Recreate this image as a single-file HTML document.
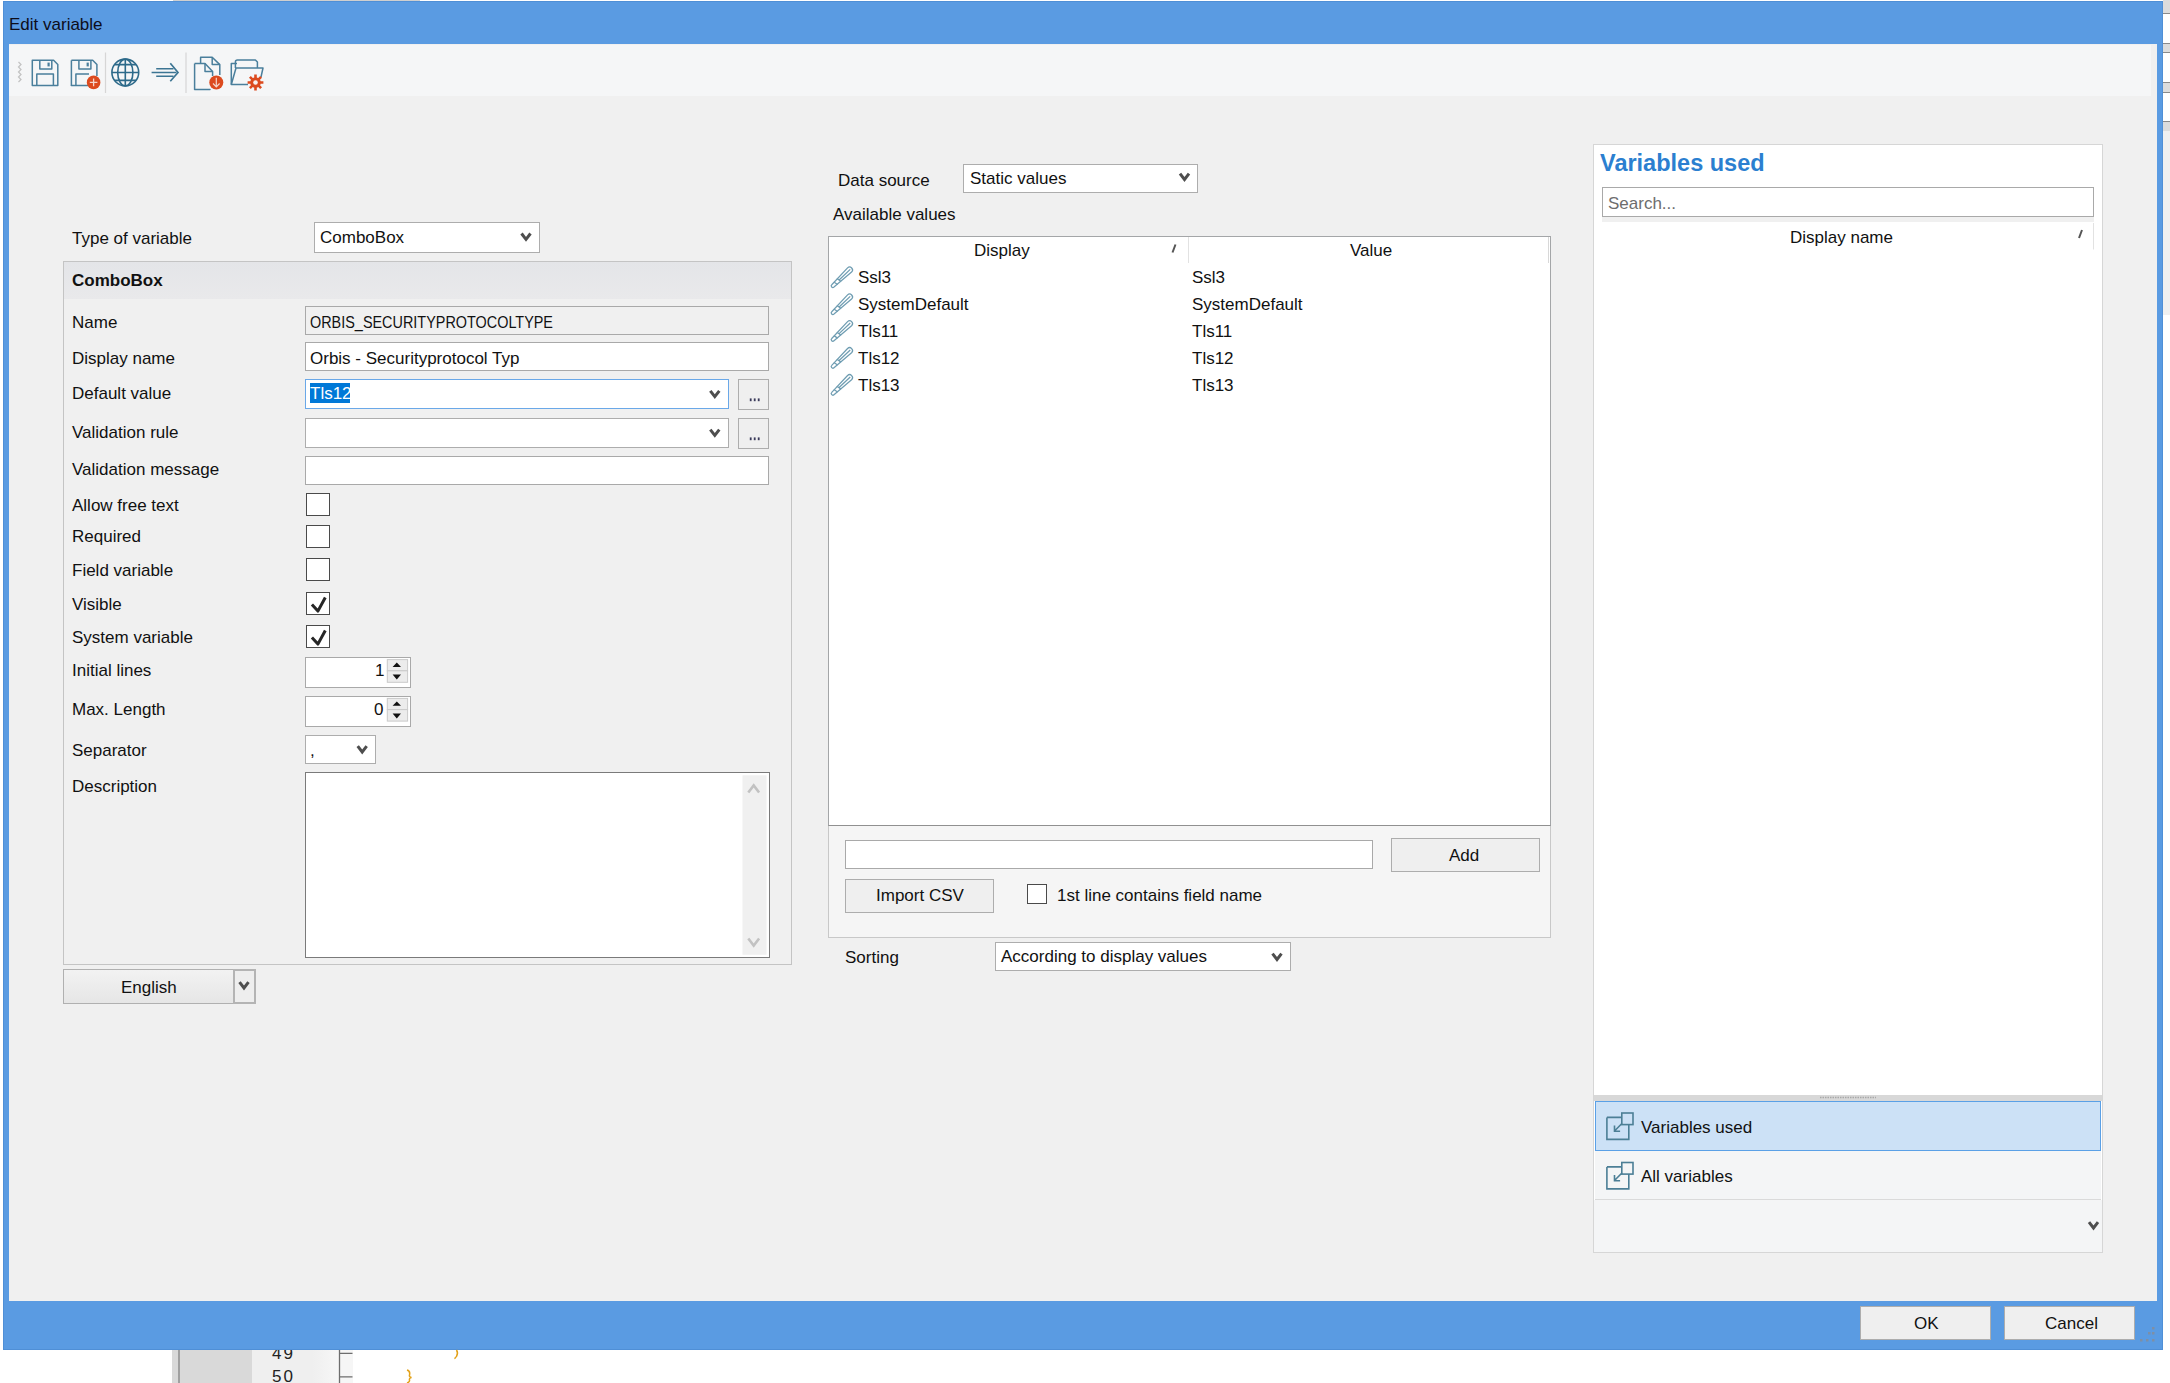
<!DOCTYPE html>
<html><head><meta charset="utf-8">
<style>
html,body{margin:0;padding:0}
body{width:2170px;height:1383px;overflow:hidden;background:#fff;position:relative;font-family:"Liberation Sans",sans-serif;font-size:17px;color:#111}
.a{position:absolute;box-sizing:border-box}
.t{position:absolute;white-space:pre;font-size:17px;line-height:normal}
.tb{border:1px solid #a9a9a9;background:#fff}
.cb{border:1px solid #adadad;background:#fff}
.btn{border:1px solid #adadad;background:#efefef}
.chk{border:1px solid #4a4a4a;background:#fff;width:24px;height:23px}
</style></head><body>

<!-- background remnants -->
<div class="a" style="left:173px;top:0;width:247px;height:2px;background:#cfcfcf"></div>
<div class="a" style="left:2163px;top:0;width:7px;height:14px;background:#dcdcdc;border-bottom:1px solid #8a8a8a"></div>
<div class="a" style="left:2163px;top:43px;width:7px;height:10px;background:#dcdcdc;border-top:1px solid #8a8a8a;border-bottom:1px solid #8a8a8a"></div>
<div class="a" style="left:2163px;top:82px;width:7px;height:11px;background:#dcdcdc;border-top:1px solid #8a8a8a;border-bottom:1px solid #8a8a8a"></div>
<div class="a" style="left:2163px;top:121px;width:7px;height:10px;background:#dcdcdc;border-top:1px solid #8a8a8a"></div>
<div class="a" style="left:2163px;top:131px;width:7px;height:184px;background:#f0f0f0"></div>

<!-- code editor remnant -->
<div class="a" style="left:172px;top:1340px;width:80px;height:43px;background:#d9d9d9"></div>
<div class="a" style="left:178px;top:1340px;width:1.5px;height:43px;background:#a0a0a0"></div>
<div class="a" style="left:252px;top:1340px;width:87px;height:43px;background:linear-gradient(90deg,#efefef 70%,#f7f7f7)"></div>
<div class="a" style="left:340px;top:1340px;width:13px;height:43px;background:#f6f6f6"></div>
<div class="t" style="left:272px;top:1344px;color:#222;letter-spacing:2px">49</div>
<div class="t" style="left:272px;top:1367px;color:#222;letter-spacing:2px">50</div>

<!-- dialog frame -->
<div class="a" style="left:3px;top:1px;width:2160px;height:1349px;background:#5a9be2;border:1px solid #4f8fd6"></div>
<div class="t" style="left:9px;top:15px;color:#0d0d1a">Edit variable</div>

<!-- content -->
<div class="a" style="left:9px;top:44px;width:2148px;height:1257px;background:#f0f0f0"></div>

<!-- toolbar -->
<div class="a" style="left:9px;top:45px;width:2142px;height:51px;background:#f5f6f7"></div>

<!-- LEFT PANEL -->
<div class="t" style="left:72px;top:229px">Type of variable</div>
<div class="a cb" style="left:314px;top:222px;width:226px;height:31px"></div>
<div class="t" style="left:320px;top:228px">ComboBox</div>

<!-- group box -->
<div class="a" style="left:63px;top:261px;width:729px;height:704px;border:1px solid #c4c4c4;background:#f0f0f0"></div>
<div class="a" style="left:64px;top:262px;width:727px;height:37px;background:linear-gradient(#e4e5e8,#e9e9eb)"></div>
<div class="t" style="left:72px;top:271px;font-weight:bold">ComboBox</div>

<div class="t" style="left:72px;top:313px">Name</div>
<div class="t" style="left:72px;top:349px">Display name</div>
<div class="t" style="left:72px;top:384px">Default value</div>
<div class="t" style="left:72px;top:423px">Validation rule</div>
<div class="t" style="left:72px;top:460px">Validation message</div>
<div class="t" style="left:72px;top:496px">Allow free text</div>
<div class="t" style="left:72px;top:527px">Required</div>
<div class="t" style="left:72px;top:561px">Field variable</div>
<div class="t" style="left:72px;top:595px">Visible</div>
<div class="t" style="left:72px;top:628px">System variable</div>
<div class="t" style="left:72px;top:661px">Initial lines</div>
<div class="t" style="left:72px;top:700px">Max. Length</div>
<div class="t" style="left:72px;top:741px">Separator</div>
<div class="t" style="left:72px;top:777px">Description</div>

<!-- name -->
<div class="a tb" style="left:305px;top:306px;width:464px;height:29px;background:#f0f0f0"></div>
<div class="t" style="left:310px;top:313px;transform:scaleX(0.848);transform-origin:0 0">ORBIS_SECURITYPROTOCOLTYPE</div>
<div class="a tb" style="left:305px;top:342px;width:464px;height:29px"></div>
<div class="t" style="left:310px;top:349px">Orbis - Securityprotocol Typ</div>
<!-- default value -->
<div class="a" style="left:305px;top:379px;width:424px;height:30px;border:1px solid #6aa8e8;background:#fff"></div>
<div class="a" style="left:310px;top:383px;width:40px;height:20px;background:#0078d7"></div>
<div class="t" style="left:310px;top:384px;color:#fff">Tls12</div>
<div class="a btn" style="left:738px;top:379px;width:31px;height:31px"></div>
<!-- validation rule -->
<div class="a cb" style="left:305px;top:418px;width:424px;height:30px"></div>
<div class="a btn" style="left:738px;top:418px;width:31px;height:31px"></div>
<!-- validation message -->
<div class="a tb" style="left:305px;top:456px;width:464px;height:29px"></div>
<!-- checkboxes -->
<div class="a chk" style="left:306px;top:493px"></div>
<div class="a chk" style="left:306px;top:525px"></div>
<div class="a chk" style="left:306px;top:558px"></div>
<div class="a chk" style="left:306px;top:592px"></div>
<div class="a chk" style="left:306px;top:625px"></div>
<!-- spinners -->
<div class="a tb" style="left:305px;top:657px;width:106px;height:31px"></div>
<div class="t" style="left:375px;top:661px">1</div>
<div class="a tb" style="left:305px;top:696px;width:106px;height:31px"></div>
<div class="t" style="left:374px;top:700px">0</div>
<!-- separator -->
<div class="a cb" style="left:305px;top:735px;width:71px;height:29px"></div>
<div class="t" style="left:310px;top:741px">,</div>
<!-- description -->
<div class="a" style="left:305px;top:772px;width:465px;height:186px;border:1px solid #7a7a7a;background:#fff"></div>
<!-- english -->
<div class="a" style="left:63px;top:969px;width:193px;height:35px;border:1px solid #b0b0b0;background:linear-gradient(#f2f2f2,#e6e6e6)"></div>
<div class="a" style="left:233px;top:969px;width:23px;height:35px;border:2px solid #b4b4b4;background:#eeeeee"></div>
<div class="t" style="left:121px;top:978px">English</div>

<!-- MIDDLE PANEL -->
<div class="t" style="left:838px;top:171px">Data source</div>
<div class="a cb" style="left:963px;top:164px;width:235px;height:29px"></div>
<div class="t" style="left:970px;top:169px">Static values</div>
<div class="t" style="left:833px;top:205px">Available values</div>

<div class="a" style="left:828px;top:236px;width:723px;height:590px;border:1px solid #a4a6a8;border-bottom:1px solid #909090;background:#fff"></div>
<div class="t" style="left:974px;top:241px">Display</div>
<div class="t" style="left:1350px;top:241px">Value</div>
<div class="a" style="left:1188px;top:237px;width:1px;height:26px;background:#e2e2e2"></div>
<div class="a" style="left:1548px;top:237px;width:1px;height:26px;background:#d8d8d8"></div>

<div class="t" style="left:858px;top:268px">Ssl3</div>
<div class="t" style="left:858px;top:295px">SystemDefault</div>
<div class="t" style="left:858px;top:322px">Tls11</div>
<div class="t" style="left:858px;top:349px">Tls12</div>
<div class="t" style="left:858px;top:376px">Tls13</div>
<div class="t" style="left:1192px;top:268px">Ssl3</div>
<div class="t" style="left:1192px;top:295px">SystemDefault</div>
<div class="t" style="left:1192px;top:322px">Tls11</div>
<div class="t" style="left:1192px;top:349px">Tls12</div>
<div class="t" style="left:1192px;top:376px">Tls13</div>

<div class="a" style="left:828px;top:826px;width:723px;height:112px;border:1px solid #c8c8c8;border-top:none;background:#f5f5f5"></div>
<div class="a tb" style="left:845px;top:840px;width:528px;height:29px"></div>
<div class="a btn" style="left:1391px;top:838px;width:149px;height:34px"></div>
<div class="t" style="left:1449px;top:846px">Add</div>
<div class="a btn" style="left:845px;top:879px;width:149px;height:34px"></div>
<div class="t" style="left:876px;top:886px">Import CSV</div>
<div class="a chk" style="left:1027px;top:884px;width:20px;height:20px"></div>
<div class="t" style="left:1057px;top:886px">1st line contains field name</div>

<div class="t" style="left:845px;top:948px">Sorting</div>
<div class="a cb" style="left:995px;top:942px;width:296px;height:29px"></div>
<div class="t" style="left:1001px;top:947px">According to display values</div>

<!-- RIGHT PANEL -->
<div class="a" style="left:1593px;top:144px;width:510px;height:1109px;border:1px solid #d6d6d6;background:#fff"></div>
<div class="a" style="left:1602px;top:217px;width:492px;height:5px;background:#f0f0f0"></div>
<div class="t" style="left:1600px;top:150px;font-size:23.5px;font-weight:bold;color:#2b7fd0">Variables used</div>
<div class="a tb" style="left:1602px;top:187px;width:492px;height:30px"></div>
<div class="t" style="left:1608px;top:194px;color:#6d6d6d">Search...</div>
<div class="t" style="left:1790px;top:228px">Display name</div>

<div class="a" style="left:1594px;top:1095px;width:508px;height:6px;background:#d8d8d8"></div>
<div class="a" style="left:1595px;top:1101px;width:506px;height:50px;border:1px solid #5aa0e6;background:#cce1f6"></div>
<div class="t" style="left:1641px;top:1118px">Variables used</div>
<div class="a" style="left:1595px;top:1151px;width:506px;height:49px;background:#f4f5f6;border-bottom:1px solid #dadada"></div>
<div class="t" style="left:1641px;top:1167px">All variables</div>
<div class="a" style="left:1594px;top:1200px;width:508px;height:52px;background:#f4f5f6"></div>

<!-- bottom buttons -->
<div class="a btn" style="left:1860px;top:1306px;width:131px;height:34px"></div>
<div class="t" style="left:1914px;top:1314px">OK</div>
<div class="a btn" style="left:2004px;top:1306px;width:131px;height:34px"></div>
<div class="t" style="left:2045px;top:1314px">Cancel</div>



<svg class="a" style="left:0;top:0" width="2170" height="1383">
<defs>
 <g id="chev"><path d="M1,1.2 L5.5,7 L10,1.2" fill="none" stroke="#4e4e4e" stroke-width="3" stroke-linejoin="miter"/></g>
 <g id="pencil" fill="none" stroke="#6f9db2" stroke-width="1.25" stroke-linejoin="round">
  <path d="M-12.5,-1.6 L10.6,-2.9 A2.9,2.9 0 0 1 10.6,2.9 L-12.5,1.6 A1.6,1.6 0 0 1 -12.5,-1.6 Z"/>
  <path d="M-9,-2.2 L-8,2.2 M-4.5,-2.5 L-3.5,2.5 M-3.5,0 H11.5"/>
 </g>
 <g id="itm" fill="none" stroke="#4c7f96" stroke-width="1.6">
  <path d="M0,4.4 H14.9 M0,4.4 V26.4 H21.9 V11.6"/>
  <rect x="14.9" y="0" width="11.2" height="11.6"/>
  <path d="M15,10.5 L7.6,18 M7.6,12.6 V18.3 H13.2"/>
 </g>
 <g id="chk"><path d="M0,7 L6,13.6 L13.4,0" fill="none" stroke="#262626" stroke-width="3" stroke-linejoin="round"/></g>
</defs>

<!-- toolbar icons -->
<path d="M18.5,62 L21,64.5 L18.5,67 L21,69.5 L18.5,72 L21,74.5 L18.5,77 L21,79.5 L18.5,82" fill="none" stroke="#c2c2c2" stroke-width="1.2"/>
<g fill="none" stroke="#4a7f9c" stroke-width="1.5" stroke-linejoin="round">
 <path d="M32.3,60.3 H53.6 L57.8,64.5 V85.6 H32.3 Z"/>
 <path d="M39.8,60.3 V69 H51.8 V60.3"/>
 <path d="M36.8,85.6 V74 H53.4 V85.6"/>
 <path d="M48.6,62.6 V66.4" stroke-width="2.2"/>
 <path d="M71.4,60.3 H92.7 L96.9,64.5 V76 M89,85.6 H71.4 Z"/>
 <path d="M71.4,60.3 V85.6"/>
 <path d="M78.9,60.3 V69 H90.9 V60.3"/>
 <path d="M75.9,85.6 V74 H89"/>
 <path d="M87.7,62.6 V66.4" stroke-width="2.2"/>
</g>
<circle cx="93.6" cy="82.4" r="6.8" fill="#dc4a1e"/>
<path d="M93.6,78.6 V86.2 M89.8,82.4 H97.4" stroke="#f4d6cc" stroke-width="1.3"/>
<path d="M105.5,52.5 V93" stroke="#d6d6d6" stroke-width="1.2"/>
<g fill="none" stroke="#2d6a8a" stroke-width="1.6">
 <circle cx="125.3" cy="72.5" r="13.4"/>
 <ellipse cx="125.3" cy="72.5" rx="7.6" ry="13.4"/>
 <path d="M125.3,59 V86 M112,72.5 H138.6 M114.5,64.6 H136.1 M114.5,80.4 H136.1"/>
</g>
<g fill="none" stroke="#3c7593" stroke-width="1.5">
 <path d="M156.2,68.8 H173.5 M151.6,72.5 H176.5 M156.2,76.2 H173.5"/>
 <path d="M170.3,63.3 L178,72.5 L170.3,81.3" stroke-width="1.7"/>
</g>
<path d="M186,52.5 V93" stroke="#d6d6d6" stroke-width="1.2"/>
<g fill="none" stroke="#4a7f9c" stroke-width="1.5" stroke-linejoin="round">
 <path d="M200.6,63 V57.3 H212.2 L219.8,64.6 V75"/>
 <path d="M212.2,57.3 V64.6 H219.8"/>
 <path d="M194.6,63.6 H205 L212.6,71.5 V76 M210,89.5 H194.6 Z"/>
 <path d="M194.6,63.6 V89.5"/>
 <path d="M205,63.6 V71.5 H212.6"/>
</g>
<circle cx="216.3" cy="82.5" r="7" fill="#dc4a1e"/>
<path d="M216.3,77.8 V86.5 M213,83.5 L216.3,86.8 L219.6,83.5" fill="none" stroke="#f4d6cc" stroke-width="1.2"/>
<g fill="none" stroke="#4a7f9c" stroke-width="1.5" stroke-linejoin="round">
 <path d="M235.4,68 V62 Q235.4,60 237.4,60 H255.4 L257.4,62 V68"/>
 <path d="M237,63.5 H231.3 V84.5 H248"/>
 <path d="M231.3,84.5 L236,68 H263 L261,77"/>
</g>
<g fill="#dc4a1e">
 <circle cx="255.5" cy="82.5" r="5.3"/>
 <path d="M255.5,74.6 V90.4 M247.6,82.5 H263.4 M249.9,76.9 L261.1,88.1 M261.1,76.9 L249.9,88.1" stroke="#dc4a1e" stroke-width="2.6"/>
 <circle cx="255.5" cy="82.5" r="2.3" fill="#f8f0ee"/>
</g>

<!-- chevrons -->
<use href="#chev" x="520.5" y="232.3"/>
<use href="#chev" x="709.3" y="389.6"/>
<use href="#chev" x="709.3" y="428.4"/>
<use href="#chev" x="356.7" y="745"/>
<use href="#chev" x="1179" y="172.5"/>
<use href="#chev" x="1271.5" y="952.5"/>
<use href="#chev" x="238.5" y="981"/>
<use href="#chev" x="2088" y="1221"/>

<!-- ... dots -->
<g fill="#3a3a5a">
 <rect x="749.8" y="398.4" width="1.8" height="2.8"/><rect x="753.8" y="398.4" width="1.8" height="2.8"/><rect x="757.8" y="398.4" width="1.8" height="2.8"/>
 <rect x="749.8" y="437.4" width="1.8" height="2.8"/><rect x="753.8" y="437.4" width="1.8" height="2.8"/><rect x="757.8" y="437.4" width="1.8" height="2.8"/>
</g>

<!-- checks -->
<use href="#chk" x="311.9" y="597.5"/>
<use href="#chk" x="311.9" y="630.5"/>

<!-- spinners -->
<g>
 <rect x="387.3" y="659.6" width="20.3" height="11.2" fill="#ececec" stroke="#cacaca" stroke-width="1"/>
 <rect x="387.3" y="670.8" width="20.3" height="11.5" fill="#ececec" stroke="#cacaca" stroke-width="1"/>
 <path d="M392.6,667 L396.8,662.6 L401,667 Z M392.6,674.6 L396.8,679.6 L401,674.6 Z" fill="#111"/>
 <rect x="387.3" y="698.4" width="20.3" height="11.2" fill="#ececec" stroke="#cacaca" stroke-width="1"/>
 <rect x="387.3" y="709.6" width="20.3" height="11.5" fill="#ececec" stroke="#cacaca" stroke-width="1"/>
 <path d="M392.6,705.8 L396.8,701.4 L401,705.8 Z M392.6,713.4 L396.8,718.4 L401,713.4 Z" fill="#111"/>
</g>

<!-- description scrollbar -->
<rect x="742.5" y="775.3" width="24" height="179.5" fill="#f0f0f0"/>
<path d="M748.3,792.5 L753.7,785.5 L759.1,792.5 M748.3,938.5 L753.7,945.5 L759.1,938.5" fill="none" stroke="#c2c2c2" stroke-width="2.6"/>

<!-- grid pencils -->
<g transform="translate(841.9,277.3) rotate(-43.6)"><use href="#pencil"/></g>
<g transform="translate(841.9,304.3) rotate(-43.6)"><use href="#pencil"/></g>
<g transform="translate(841.9,331.0) rotate(-43.6)"><use href="#pencil"/></g>
<g transform="translate(841.9,357.9) rotate(-43.6)"><use href="#pencil"/></g>
<g transform="translate(841.9,384.9) rotate(-43.6)"><use href="#pencil"/></g>

<!-- sort glyphs -->
<path d="M1175.5,244.5 L1172.5,252.5 M2082,230 L2079,238" stroke="#555" stroke-width="2"/>
<path d="M2093.5,223 V249.5" stroke="#e2e2e2" stroke-width="1"/>

<!-- item icons -->
<use href="#itm" x="1606.9" y="1113"/>
<use href="#itm" x="1606.9" y="1162.5"/>

<!-- splitter grip -->
<path d="M1820,1097.5 H1876" stroke="#a8a8a8" stroke-width="1.5" stroke-dasharray="1.5,1"/>

<!-- resize grip -->
<g fill="#7d8fa6">
 <rect x="2152" y="1327" width="2.5" height="2.5"/>
 <rect x="2148" y="1332" width="2.5" height="2.5"/><rect x="2152" y="1332" width="2.5" height="2.5"/>
 <rect x="2140" y="1339" width="2.5" height="2.5"/><rect x="2146" y="1339" width="2.5" height="2.5"/><rect x="2152" y="1339" width="2.5" height="2.5"/>
</g>

<!-- code remnant -->
<path d="M339.5,1350 V1383 M339.5,1353.3 H352.5 M339.5,1376.9 H352.5" stroke="#6e6e6e" stroke-width="1.3" fill="none"/>
<path d="M456.5,1350 Q458.5,1353 456.5,1356.5 Q454.5,1358 455,1359" stroke="#e3a21a" stroke-width="1.5" fill="none"/>
<path d="M407,1370 Q410.5,1371 409.5,1375 Q409,1377 411.5,1377.5 Q409,1378 409.5,1380 Q410,1382 407,1383" stroke="#e3a21a" stroke-width="1.5" fill="none"/>
</svg>

</body></html>
